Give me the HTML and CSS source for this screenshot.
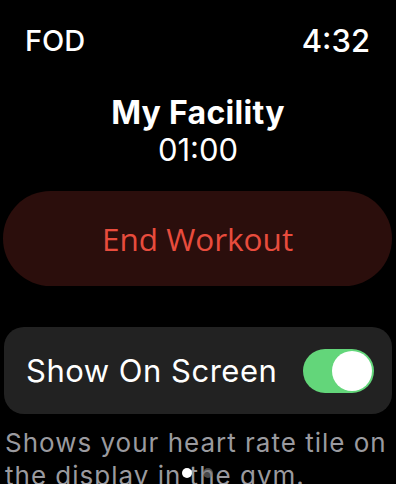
FILE: index.html
```html
<!DOCTYPE html>
<html>
<head>
<meta charset="utf-8">
<link rel="stylesheet" href="styles.css">
</head>
<body>
<div class="screen">
  <div class="status">
    <span class="app">FOD</span>
    <span class="time">4:32</span>
  </div>
  <div class="heading">
    <div class="title">My Facility</div>
    <div class="elapsed">01:00</div>
  </div>
  <div class="end-btn">End Workout</div>
  <div class="card">
    <span class="card-label">Show On Screen</span>
    <span class="toggle"><span class="knob"></span></span>
  </div>
  <p class="desc">Shows your heart rate tile on the display in the gym.</p>
  <div class="dots"><span class="dot on"></span><span class="dot"></span></div>
</div>
</body>
</html>
```
FILE: styles.css
```css
html, body {
  margin: 0;
  padding: 0;
  background: #000;
}
.screen {
  position: relative;
  width: 396px;
  height: 484px;
  overflow: hidden;
  font-family: Inter, "Liberation Sans", sans-serif;
  color: #fff;
}
.status {
  display: flex;
  justify-content: space-between;
  padding: 22px 26px 0 25px;
  font-size: 31px;
  line-height: 38px;
  font-weight: 500;
}
.app {
  font-size: 29px;
}
.heading {
  margin-top: 35px;
  text-align: center;
}
.title {
  font-size: 32px;
  font-weight: 700;
  line-height: 36px;
  letter-spacing: 0.3px;
}
.elapsed {
  font-size: 31px;
  line-height: 38px;
  font-weight: 400;
}
.end-btn {
  margin: 22px 4px 0 3px;
  height: 95px;
  border-radius: 48px;
  background: #2b0e0c;
  color: #e84c3d;
  display: flex;
  align-items: center;
  justify-content: center;
  font-family: "Open Sans", sans-serif;
  font-size: 31.5px;
}
.card {
  margin: 41px 4px 0 4px;
  height: 87px;
  border-radius: 20px;
  background: #222222;
  display: flex;
  align-items: center;
  justify-content: space-between;
  padding: 0 18px 0 22px;
}
.card-label {
  font-size: 31px;
  letter-spacing: 0.5px;
}
.toggle {
  width: 71px;
  height: 44px;
  border-radius: 22px;
  background: #63d67a;
  position: relative;
}
.knob {
  position: absolute;
  right: 2px;
  top: 2px;
  width: 40px;
  height: 40px;
  border-radius: 50%;
  background: #fff;
}
.desc {
  margin: 12px 0 0 0;
  padding: 0 5px;
  font-size: 26px;
  line-height: 33px;
  letter-spacing: 1px;
  color: #9a9a9f;
}
.dots {
  position: absolute;
  left: 182px;
  top: 468px;
  display: flex;
  gap: 11px;
}
.dot {
  width: 10px;
  height: 10px;
  border-radius: 50%;
  background: rgba(120, 120, 120, 0.6);
}
.dot.on {
  background: #fff;
}
```
